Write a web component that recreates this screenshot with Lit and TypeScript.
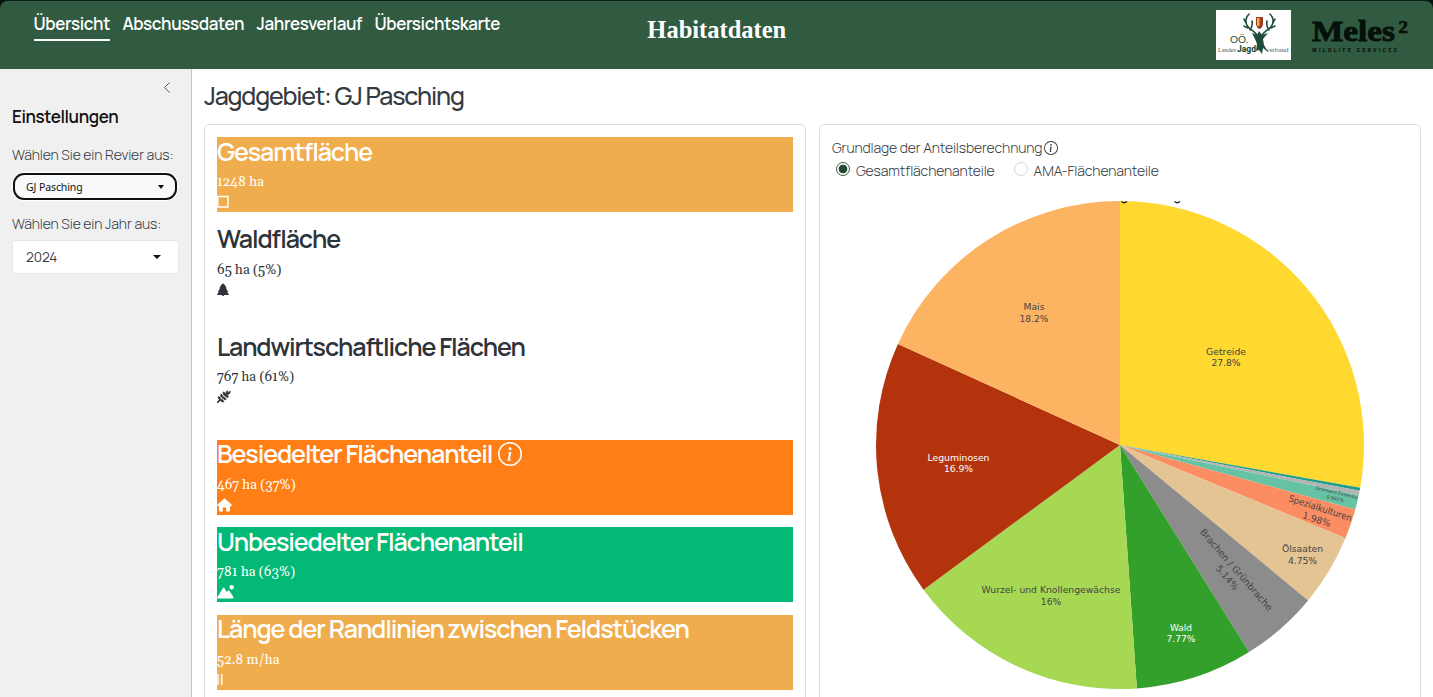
import { LitElement, html, svg, css, nothing } from 'lit';
import { customElement, property } from 'lit/decorators.js';
import { classMap } from 'lit/directives/class-map.js';

const infoIcon = html`
  <svg class="info" viewBox="0 0 16 16" fill="currentColor">
    <path d="M8 15A7 7 0 1 1 8 1a7 7 0 0 1 0 14m0 1A8 8 0 1 0 8 0a8 8 0 0 0 0 16"/>
    <path d="m8.93 6.588-2.29.287-.082.38.45.083c.294.07.352.176.288.469l-.738 3.468c-.194.897.105 1.319.808 1.319.545 0 1.178-.252 1.465-.598l.088-.416c-.2.176-.492.246-.686.246-.275 0-.375-.193-.304-.533zM9 4.5a1 1 0 1 1-2 0 1 1 0 0 1 2 0"/>
  </svg>`;

const icons = {
  square: svg`<path d="M0.8 1.500H11V12H0.8Z" fill="none" stroke="currentColor" stroke-width="1.500"/>`,
  tree: svg`<path d="M6 .2Q8.800 2 9.600 5.300L9 5.500Q10.800 7.500 11 9H10.200L12 11.500 11.500 12H6.800V13H5.200V12H.5L0 11.500 1.800 9H1Q1.200 7.500 3 5.500L2.400 5.300Q3.200 2 6 .2Z"/>`,
  wheat: svg`<path d="M.3 12.700 3 10" stroke="currentColor" stroke-width="1.700"/>
    <path stroke="currentColor" stroke-width=".8" d="M3 10.200C.8 8.600 1 7.300 1.700 6.500 3.200 7.200 3.900 8.300 3.700 9.500ZM5.300 7.900C3.200 6.300 3.400 5 4.100 4.200 5.600 4.900 6.200 6 6 7.200ZM7.600 5.600C5.600 4 5.800 2.700 6.500 1.900 8 2.600 8.600 3.700 8.400 4.900ZM3.200 10.200C4.800 12.300 6.100 12.200 6.900 11.500 6.200 10 5.100 9.300 3.900 9.500ZM5.500 7.900C7.100 10 8.400 9.900 9.200 9.200 8.500 7.700 7.400 7 6.200 7.200ZM7.800 5.600C9.400 7.700 10.700 7.600 11.500 6.900 10.800 5.400 9.700 4.700 8.500 4.900ZM9 4.500C8.700 2.600 9.500 1.200 10.500.700 11 2 10.800 3.100 9.600 4.200ZM9.400 4.500C10.300 3 11.600 2.300 13.200 1.200 13.400 3.200 11.800 4.900 9.400 4.500Z"/>`,
  house: svg`<path d="M7.500.2 15 7 14.200 8.200H13V12.700Q13 13.500 12.200 13.500H9.200V9.500H5.800V13.500H2.800Q2 13.500 2 12.700V8.200H.8L0 7Z"/>`,
  mountain: svg`<path d="M.3 12.200 6 3Q6.700 2 7.400 3L9.700 7 11 5.400Q11.600 4.900 12.200 5.600L16.500 12.200Q16.800 13.500 15.700 13.500H1Q-.1 13.500 .3 12.200Z"/><circle cx="14.700" cy="2.300" r="2.200"/>`,
  lines: svg`<path d="M1 1V12M4.700 1V12" stroke="currentColor" stroke-width="1.500"/>`,
};

interface Slice {
  name?: string;
  label?: string;
  share: number;
  fill: string;
  text?: string;
  x?: number;
  y?: number;
  size?: number;
  turn?: number;
  width?: number;
}

// shares run clockwise from twelve o'clock
const slices: Slice[] = [
  { name: 'Getreide', label: '27.8%', share: 27.8, fill: '#ffd92f', x: 350, y: 164, width: 40 },
  { share: 0.21, fill: '#1b9e8a' },
  { share: 0.29, fill: '#b3b3b3' },
  { name: 'Grünland Extensiv', label: '0.961%', share: 0.961, fill: '#66c2a5', x: 460, y: 302.5, size: 4.7, turn: 13, width: 43 },
  { name: 'Spezialkulturen', label: '1.98%', share: 1.98, fill: '#fc8d62', x: 442.5, y: 320.5, turn: 18, width: 66 },
  { name: 'Ölsaaten', label: '4.75%', share: 4.75, fill: '#e5c494', x: 426.5, y: 361.5, width: 41 },
  { name: 'Brachen / Grünbrache', label: '5.14%', share: 5.14, fill: '#8c8c8c', x: 356, y: 380.5, turn: 49, width: 105 },
  { name: 'Wald', label: '7.77%', share: 7.77, fill: '#33a02c', text: '#fff', x: 305, y: 440, width: 22 },
  { name: 'Wurzel- und Knollengewächse', label: '16%', share: 16, fill: '#a6d854', x: 175, y: 402.5, width: 139 },
  { name: 'Leguminosen', label: '16.9%', share: 16.9, fill: '#b3340c', text: '#fff', x: 82.5, y: 270, width: 62 },
  { name: 'Mais', label: '18.2%', share: 18.2, fill: '#fdb462', x: 158, y: 119.5, width: 21 },
];

@customElement('pie-chart')
export class PieChart extends LitElement {
  static styles = css`
    :host { display: block; }
    svg { display: block; width: 488px; height: 496px; margin: 0 auto; overflow: visible; }
    text {
      font-family: Verdana, "DejaVu Sans", sans-serif;
      text-anchor: middle;
    }
  `;

  @property({ attribute: false }) slices: Slice[] = [];

  render() {
    const r = 244;
    const total = this.slices.reduce((sum, s) => sum + s.share, 0);
    let angle = 0;
    const point = (a: number) => `${r + r * Math.sin(a)} ${r - r * Math.cos(a)}`;
    const paths = this.slices.map(s => {
      const from = angle;
      angle += (s.share / total) * Math.PI * 2;
      return svg`<path fill=${s.fill} d="M${r} ${r}L${point(from)}A${r} ${r} 0 0 1 ${point(angle)}Z"/>`;
    });
    const labels = this.slices.filter(s => s.name).map(s => {
      const size = s.size ?? 9.2;
      return svg`
        <g transform="translate(${s.x} ${s.y! - 8}) rotate(${s.turn ?? 0})" fill=${s.text ?? '#444'} font-size=${size}>
          <text y=${size * -0.27} textLength=${s.width} lengthAdjust="spacingAndGlyphs">${s.name}</text>
          <text y=${size * 1.03}>${s.label}</text>
        </g>`;
    });
    // only the descenders of the clipped chart title stay visible
    return html`
      <svg viewBox="0 0 488 496">
        ${paths}
        ${labels}
        <path d="M245.500 .5Q248 3 251 .5M298.500 .5Q301 3 304 .5" fill="none" stroke="#222" stroke-width="1.300"/>
      </svg>`;
  }
}

@customElement('value-box')
export class ValueBox extends LitElement {
  static styles = css`
    :host { display: block; color: #2d3338; }
    .box { height: 75px; }
    .amber, .orange, .green { color: #fff; }
    .amber { background: #f0ad4e; }
    .orange { background: #ff7f16; }
    .green { background: #03b976; }
    h2 {
      display: flex;
      align-items: center;
      gap: 6px;
      margin: 0 0 8px;
      height: 29px;
      font: 600 25px/28px Manrope, Inter, sans-serif;
      letter-spacing: -1.1px;
      white-space: nowrap;
    }
    p {
      margin: 0;
      font: 13.5px/16px Gelasio, Georgia, "Liberation Serif", serif;
      font-feature-settings: "onum";
    }
    .icon { display: block; width: 18px; height: 14px; margin-top: 5px; }
    .info { width: 24px; height: 24px; }
  `;

  @property() heading = '';
  @property() value = '';
  @property() icon: keyof typeof icons = 'square';
  @property() color = '';
  @property({ type: Boolean }) info = false;

  render() {
    return html`
      <div class=${classMap({ box: true, [this.color || 'plain']: true })}>
        <h2>${this.heading}${this.info ? infoIcon : nothing}</h2>
        <p>${this.value}</p>
        <svg class="icon" viewBox="0 0 18 14" fill="currentColor">${icons[this.icon]}</svg>
      </div>`;
  }
}

@customElement('app-root')
export class AppRoot extends LitElement {
  static styles = css`
    :host {
      display: block;
      height: 697px;
      overflow: hidden;
      background: #fff;
      color: #343a40;
      font-family: Manrope, Inter, sans-serif;
    }
    * { box-sizing: border-box; }

    .frame { background: #06120f; }
    header {
      display: grid;
      grid-template-columns: 1fr auto 1fr;
      height: 69px;
      padding: 0 25px 0 33.5px;
      background: #315b41;
      border-top: 1px solid #0a1f16;
      border-radius: 8px 8px 0 0;
      color: #fff;
    }
    nav { display: flex; gap: 12.4px; padding-top: 9px; }
    nav span {
      height: 31px;
      font-size: 17px;
      font-weight: 600;
      line-height: 27px;
      letter-spacing: -0.36px;
      white-space: nowrap;
    }
    nav .active { border-bottom: 2px solid #fff; }
    h1 {
      margin: 0 8px 0 0;
      padding-top: 15px;
      font: bold 24.5px/28px "Liberation Serif", serif;
    }
    .logos { display: flex; justify-content: flex-end; gap: 21px; padding-top: 9px; }
    .jagd { width: 75px; height: 50px; }
    .meles { width: 96px; height: 50px; overflow: visible; }

    .layout { display: flex; height: 628px; }
    aside {
      width: 192px;
      padding: 12px 13px 0 12px;
      background: #f0f0f0;
      border-right: 1px solid #c6c8ca;
    }
    .collapse { display: block; width: 8px; height: 13px; margin-left: 151px; }
    aside h3 {
      margin: 13px 0 18px;
      color: #111;
      font-size: 17px;
      font-weight: 600;
      line-height: 20px;
      letter-spacing: -0.4px;
    }
    .label { font-size: 14px; line-height: 20px; letter-spacing: -0.1px; white-space: nowrap; font-weight: 300; }
    .select {
      display: flex;
      align-items: center;
      justify-content: space-between;
      width: 167px;
      height: 34px;
      padding: 0 17px 0 13px;
      background: #fff;
      border: 1px solid #e6e7e8;
      border-radius: 3px;
      font-size: 13.5px;
    }
    .select.focused {
      width: 164px;
      height: 27px;
      margin: 8px 0 14px 1px;
      padding: 0 11px;
      background: #f8f9fb;
      border: 2px solid #111;
      border-radius: 11px;
      color: #111;
      font: 10.5px "Noto Sans", sans-serif;
      letter-spacing: -0.1px;
      box-shadow: 0 0 0 1px #fff;
    }
    .caret { border: 4px solid transparent; border-top: 4px solid #111; border-bottom: 0; }
    .focused .caret { border-width: 3px; border-top-width: 4px; border-bottom: 0; }
    .year { margin-top: 6px; }

    main { flex: 1; padding: 12px 12px 0; }
    main h2 {
      margin: 0 0 13px;
      font-size: 25px;
      font-weight: 500;
      line-height: 30px;
      letter-spacing: -1.2px;
    }
    .cards { display: grid; grid-template-columns: 602px 602px; gap: 13px; }
    .card {
      height: 620px;
      padding: 13px 12px;
      border: 1px solid #dcdfe1;
      border-radius: 5px;
    }
    .boxes { display: flex; flex-direction: column; gap: 12.5px; padding-top: 12.4px; }
    .tall { height: 95px; }

    .basis { display: flex; align-items: center; gap: 2px; height: 19px; font-size: 14px; letter-spacing: -0.12px; font-weight: 300; }
    .basis .info { width: 14px; height: 14px; }
    .radios { display: flex; gap: 19px; height: 26px; padding: 1px 4px 0; font-size: 14px; line-height: 26px; font-weight: 300; }
    .radios label { display: flex; gap: 6px; letter-spacing: -0.12px; }
    .radio { width: 14px; height: 14px; margin-top: 4px; border: 1px solid #d2d5d8; border-radius: 50%; }
    .radio.on { border-color: #315b41; background: radial-gradient(circle, #234b32 0 4px, #fff 4.7px); }
    pie-chart { margin-top: 18px; }
  `;

  private logo = html`
    <svg class="jagd" viewBox="0 0 75 50">
      <rect width="75" height="50" fill="#fff"/>
      <g fill="none" stroke="#1e4d3a" stroke-width="1.6" stroke-linecap="round">
        <path d="M41 25C38 20 29 18 30 10Q30 7 33 4M30.500 14 28 9M32 18 28 16M34 20Q37 16 36 11M46 25C49 20 58 18 57 10Q57 7 54 4M56.500 14 59 9M55 18 59 16M53 20Q50 16 51 11"/>
      </g>
      <path d="M36 23 41 25 43 21 46 25 52 23 47 29 48 35 52 42 47 38 46 44 43 40 40 41 41 34 39 29Z" fill="#1e4d3a"/>
      <path d="M40 7H47V15Q46 18 43.500 19 41 18 40 15Z" fill="#9c3b28"/>
      <path d="M41 8H43.500V16H41Z" fill="#efb33c"/>
      <text x="14" y="33" font-family="Lato, sans-serif" font-size="10" fill="#1e4d3a">OÖ.</text>
      <text x="2" y="42" font-family="Liberation Serif, serif" font-size="7" textLength="18" lengthAdjust="spacingAndGlyphs" fill="#555">Landes</text>
      <text x="21" y="42" font-family="Roboto, sans-serif" font-size="9.5" font-weight="800" textLength="19" lengthAdjust="spacingAndGlyphs" fill="#1e4d3a">Jagd</text>
      <text x="50" y="42" font-family="Liberation Serif, serif" font-size="7" textLength="22.5" lengthAdjust="spacingAndGlyphs" fill="#555">verband</text>
    </svg>`;

  private meles = html`
    <svg class="meles" viewBox="0 0 96 50" fill="#06100b">
      <text x="0" y="30.5" font-family="Liberation Serif, serif" font-weight="bold" font-size="30" textLength="83" lengthAdjust="spacingAndGlyphs" stroke="#06100b" stroke-width=".9">Meles</text>
      <text x="86" y="30.5" font-family="Liberation Serif, serif" font-weight="bold" font-size="30" textLength="10" lengthAdjust="spacingAndGlyphs" stroke="#06100b" stroke-width=".5">²</text>
      <text x="0" y="42" font-family="Roboto, sans-serif" font-weight="bold" font-size="5.5" textLength="85">WILDLIFE SERVICES</text>
    </svg>`;

  render() {
    return html`
      <div class="frame">
        <header>
          <nav>
            <span class="active">Übersicht</span>
            <span>Abschussdaten</span>
            <span>Jahresverlauf</span>
            <span>Übersichtskarte</span>
          </nav>
          <h1>Habitatdaten</h1>
          <div class="logos">${this.logo}${this.meles}</div>
        </header>
      </div>
      <div class="layout">
        <aside>
          <svg class="collapse" viewBox="0 0 8 13" fill="none" stroke="#555"><path d="M6.500 1.500 1.500 6.500 6.500 11.500"/></svg>
          <h3>Einstellungen</h3>
          <div class="label">Wählen Sie ein Revier aus:</div>
          <div class="select focused">GJ Pasching<span class="caret"></span></div>
          <div class="label">Wählen Sie ein Jahr aus:</div>
          <div class="select year">2024<span class="caret"></span></div>
        </aside>
        <main>
          <h2>Jagdgebiet: GJ Pasching</h2>
          <div class="cards">
            <section class="card boxes">
              <value-box heading="Gesamtfläche" value="1248 ha" icon="square" color="amber"></value-box>
              <value-box class="tall" heading="Waldfläche" value="65 ha (5%)" icon="tree"></value-box>
              <value-box class="tall" heading="Landwirtschaftliche Flächen" value="767 ha (61%)" icon="wheat"></value-box>
              <value-box heading="Besiedelter Flächenanteil" value="467 ha (37%)" icon="house" color="orange" info></value-box>
              <value-box heading="Unbesiedelter Flächenanteil" value="781 ha (63%)" icon="mountain" color="green"></value-box>
              <value-box heading="Länge der Randlinien zwischen Feldstücken" value="52.8 m/ha" icon="lines" color="amber"></value-box>
            </section>
            <section class="card">
              <div class="basis">Grundlage der Anteilsberechnung${infoIcon}</div>
              <div class="radios">
                <label><span class="radio on"></span>Gesamtflächenanteile</label>
                <label><span class="radio"></span>AMA-Flächenanteile</label>
              </div>
              <pie-chart .slices=${slices}></pie-chart>
            </section>
          </div>
        </main>
      </div>`;
  }
}
